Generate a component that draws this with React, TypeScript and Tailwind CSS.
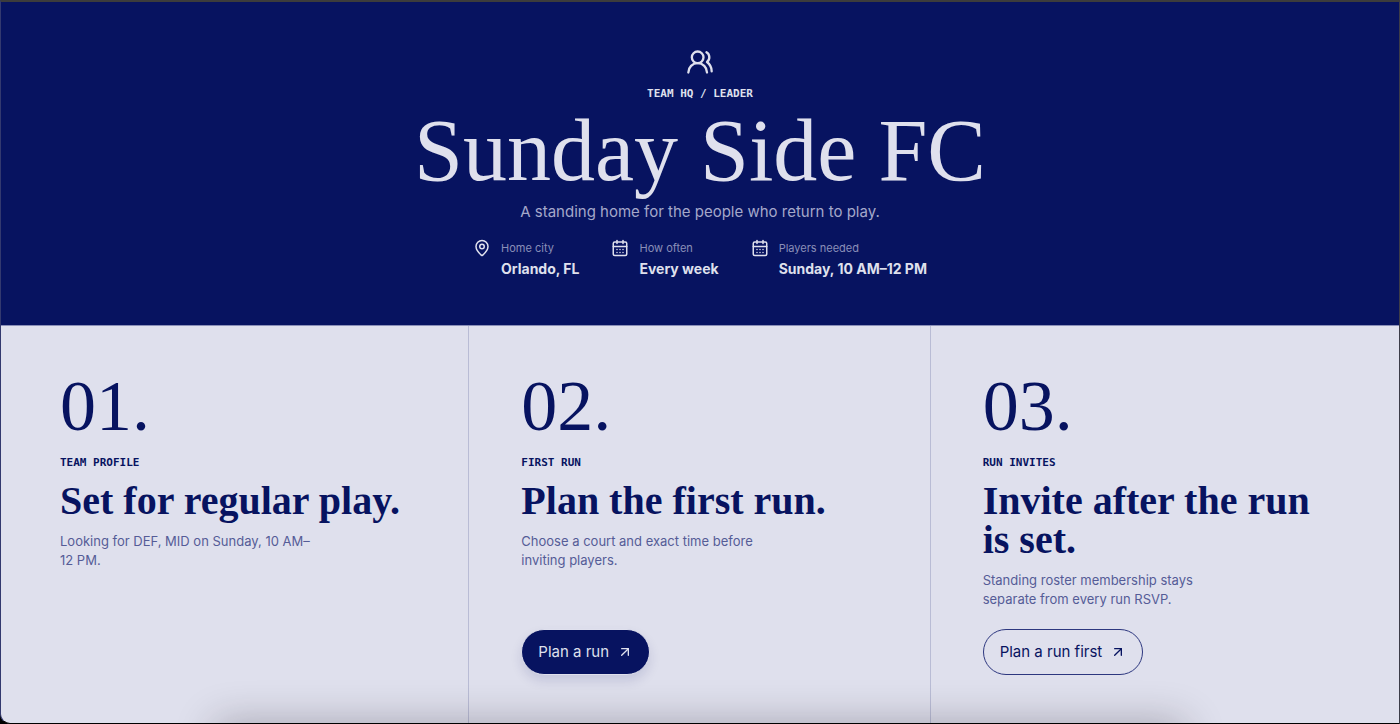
import { ArrowUpRight, CalendarDays, MapPin, UsersRound } from "lucide-react";

const facts = [
  { icon: MapPin, label: "Home city", value: "Orlando, FL" },
  { icon: CalendarDays, label: "How often", value: "Every week" },
  { icon: CalendarDays, label: "Players needed", value: "Sunday, 10 AM–12 PM" },
];

const steps = [
  {
    number: "01.",
    label: "Team profile",
    title: "Set for regular play.",
    text: "Looking for DEF, MID on Sunday, 10 AM–12 PM.",
  },
  {
    number: "02.",
    label: "First run",
    title: "Plan the first run.",
    text: "Choose a court and exact time before inviting players.",
    action: "Plan a run",
    filled: true,
  },
  {
    number: "03.",
    label: "Run invites",
    title: "Invite after the run is set.",
    text: "Standing roster membership stays separate from every run RSVP.",
    action: "Plan a run first",
  },
];

function Hero() {
  return (
    <header className="flex flex-col items-center border-b border-[#8a8fb8] bg-[#071360] px-6 pt-[46px] pb-11 text-center text-[#dfe0ed]">
      <UsersRound size={28} strokeWidth={2} aria-hidden="true" />
      <p className="mt-2 font-['DejaVu_Sans_Mono',monospace] text-[11px] leading-5 font-bold uppercase">
        Team HQ / Leader
      </p>
      <h1 className="mt-0.5 font-['Liberation_Serif',serif] text-[88px] leading-[90px]">
        Sunday Side FC
      </h1>
      <p className="mt-1 text-[15px] leading-6 text-[#a4a8ca]">
        A standing home for the people who return to play.
      </p>
      <dl className="mt-[15px] flex flex-wrap justify-center gap-x-8 gap-y-4 text-left">
        {facts.map(({ icon: Icon, label, value }) => (
          <div key={label} className="grid grid-cols-[auto_1fr] gap-x-2.5">
            <Icon size={18} strokeWidth={2} aria-hidden="true" />
            <dt className="text-[11px] leading-[18px] text-[#8a8fb8]">{label}</dt>
            <dd className="col-start-2 text-sm leading-6 font-bold">{value}</dd>
          </div>
        ))}
      </dl>
    </header>
  );
}

function Step({ step }: { step: (typeof steps)[number] }) {
  return (
    <section className="flex flex-col items-start border-[#b9bcd5] px-[52px] pt-10 pb-12 not-last:border-r">
      <p className="font-['Liberation_Serif',serif] text-[72px] leading-[80px]">{step.number}</p>
      <p className="mt-[7px] font-['DejaVu_Sans_Mono',monospace] text-[11px] leading-5 font-bold uppercase">
        {step.label}
      </p>
      <h2 className="mt-2 font-['Liberation_Serif',serif] text-[40px] leading-[39px] font-bold">
        {step.title}
      </h2>
      <p className="mt-3 mb-5 max-w-[260px] text-[13px] leading-[19px] text-[#555c97]">{step.text}</p>
      {step.action && (
        <button
          type="button"
          className={
            step.filled
              ? "mt-auto flex h-[46px] items-center gap-2 rounded-full border border-[#dfe0ed] bg-[#071360] px-4 text-[15px] text-[#dfe0ed] shadow-[0_6px_12px_rgba(7,19,96,0.12)]"
              : "mt-auto flex h-[46px] items-center gap-2 rounded-full border border-[#2d377f] px-4 text-[15px]"
          }
        >
          {step.action}
          <ArrowUpRight size={16} strokeWidth={2} aria-hidden="true" />
        </button>
      )}
    </section>
  );
}

export default function App() {
  return (
    <div className="flex min-h-screen bg-black font-['Inter',sans-serif]">
      <main className="relative flex grow flex-col overflow-hidden rounded-bl-[10px] border-t-2 border-r border-b border-l border-t-[#3c3c3c] border-r-[#3c3c48] border-b-black border-l-[#33396f] bg-[#dfe0ed] text-[#071360]">
        <Hero />
        <div className="grid grow grid-cols-1 px-[7px] md:grid-cols-3">
          {steps.map((step) => (
            <Step key={step.number} step={step} />
          ))}
        </div>
        <div
          className="pointer-events-none absolute inset-x-[215px] -bottom-10 h-10 shadow-[0_0_40px_rgba(30,20,30,0.3)]"
          aria-hidden="true"
        />
      </main>
    </div>
  );
}
